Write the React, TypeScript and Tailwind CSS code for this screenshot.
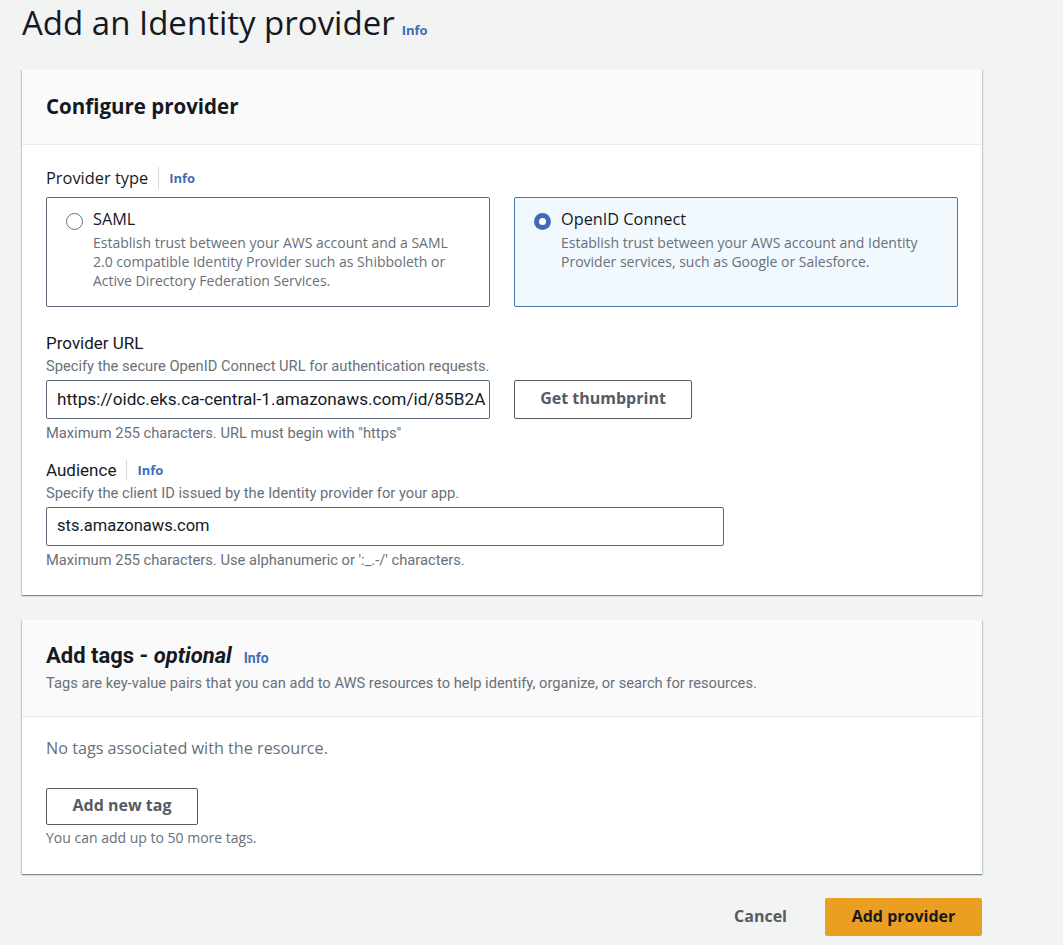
import React from "react";

const openSans = "font-['Open_Sans',sans-serif]";
const roboto = "font-['Roboto',sans-serif]";

const InfoLink = ({ className = "" }: { className?: string }) => (
  <span className={`${openSans} text-[13px] font-bold text-[#3f6db5] ${className}`}>Info</span>
);

type TileProps = {
  title: string;
  description: string;
  selected?: boolean;
};

const RadioTile = ({ title, description, selected }: TileProps) => (
  <div
    className={`flex h-[110px] gap-[10px] rounded-[2px] border pl-[19px] pr-[30px] pt-[10px] ${
      selected ? "border-[#4a73b8] bg-[#f1f8fe]" : "border-[#5f6b7a] bg-white"
    }`}
  >
    <div className="pt-[5px]">
      {selected ? (
        <div className="flex h-[17px] w-[17px] items-center justify-center rounded-full bg-[#3f6db5]">
          <div className="h-[7px] w-[7px] rounded-full bg-white" />
        </div>
      ) : (
        <div className="h-[17px] w-[17px] rounded-full border-[1.5px] border-[#687078] bg-white" />
      )}
    </div>
    <div className={openSans}>
      <div className="text-[16.3px] leading-[22px] text-[#16191f]">{title}</div>
      <p className="mt-[3px] text-[14px] leading-[19px] text-[#687078]">{description}</p>
    </div>
  </div>
);

const Field = ({
  label,
  info,
  description,
  children,
  hint,
}: {
  label: string;
  info?: boolean;
  description: string;
  children: React.ReactNode;
  hint: string;
}) => (
  <div className={roboto}>
    <div className="flex h-[22px] items-center text-[17px] leading-[22px] text-[#16191f]">
      <span>{label}</span>
      {info && (
        <>
          <span className="mx-[10px] h-[20px] w-px bg-[#d5dbdb]" />
          <InfoLink />
        </>
      )}
    </div>
    <p className="mt-[2px] text-[14.7px] leading-[20px] text-[#687078]">{description}</p>
    <div className="mt-[4px]">{children}</div>
    <p className="mt-[4px] text-[14.7px] leading-[20px] text-[#687078]">{hint}</p>
  </div>
);

const cardShadow =
  "shadow-[0_1px_1px_0_rgba(0,28,36,0.3),1px_1px_1px_0_rgba(0,28,36,0.15),-1px_1px_1px_0_rgba(0,28,36,0.15)]";

export default function App() {
  return (
    <div className="min-h-[945px] bg-[#f2f3f3] pl-[22px] pr-[81px] pt-[3px] pb-[10px]">
      <div className="flex items-baseline gap-[7px]">
        <h1 className={`${openSans} text-[33px] leading-[40px] font-normal text-[#16191f]`}>
          Add an Identity provider
        </h1>
        <InfoLink />
      </div>

      {/* Configure provider */}
      <section className={`mt-[26px] bg-white ${cardShadow}`}>
        <div className="flex h-[76px] items-center border-b border-[#eaeded] bg-[#fafafa] px-[24px]">
          <h2 className={`${openSans} text-[20.5px] font-bold text-[#16191f]`}>Configure provider</h2>
        </div>
        <div className="px-[24px] pt-[22px] pb-[25px]">
          <div className={`flex h-[22px] items-center ${openSans} text-[16.4px] leading-[22px] text-[#16191f]`}>
            <span>Provider type</span>
            <span className="mx-[10px] h-[22px] w-px bg-[#d5dbdb]" />
            <InfoLink />
          </div>
          <div className="mt-[8px] grid w-[912px] grid-cols-2 gap-[24px]">
            <RadioTile
              title="SAML"
              description="Establish trust between your AWS account and a SAML 2.0 compatible Identity Provider such as Shibboleth or Active Directory Federation Services."
            />
            <RadioTile
              selected
              title="OpenID Connect"
              description="Establish trust between your AWS account and Identity Provider services, such as Google or Salesforce."
            />
          </div>

          <div className="mt-[25px]">
            <Field
              label="Provider URL"
              description="Specify the secure OpenID Connect URL for authentication requests."
              hint={'Maximum 255 characters. URL must begin with "https"'}
            >
              <div className="flex gap-[24px]">
                <div className="flex h-[39px] w-[444px] items-center overflow-hidden whitespace-nowrap rounded-[2px] border border-[#5f6b7a] px-[10px] text-[17.2px] text-[#16191f]">
                  https://oidc.eks.ca-central-1.amazonaws.com/id/85B2A
                </div>
                <button
                  className={`${openSans} h-[39px] w-[178px] rounded-[2px] border border-[#545b64] bg-white pb-[3px] text-[16px] font-bold text-[#545b64]`}
                >
                  Get thumbprint
                </button>
              </div>
            </Field>
          </div>

          <div className="mt-[16px]">
            <Field
              label="Audience"
              info
              description="Specify the client ID issued by the Identity provider for your app."
              hint="Maximum 255 characters. Use alphanumeric or ':_.-/' characters."
            >
              <div className="flex h-[39px] w-[678px] items-center rounded-[2px] border border-[#5f6b7a] px-[10px] text-[16.5px] text-[#16191f]">
                sts.amazonaws.com
              </div>
            </Field>
          </div>
        </div>
      </section>

      {/* Add tags */}
      <section className={`mt-[25px] bg-white ${cardShadow}`}>
        <div className={`h-[97px] border-b border-[#eaeded] bg-[#fafafa] px-[24px] pt-[22px] ${roboto}`}>
          <div className="flex h-[28px] items-center gap-[12px]">
            <h2 className="text-[22px] leading-[28px] font-bold text-[#16191f]">
              Add tags - <i className="font-bold">optional</i>
            </h2>
            <InfoLink className={`${roboto} pt-[4px] text-[14px]`} />
          </div>
          <p className="mt-[3px] text-[14.7px] leading-[20px] text-[#687078]">
            Tags are key-value pairs that you can add to AWS resources to help identify, organize, or search for resources.
          </p>
        </div>
        <div className={`px-[24px] pt-[20px] pb-[26px] ${openSans}`}>
          <p className="text-[16.2px] leading-[22px] text-[#687078]">No tags associated with the resource.</p>
          <button className="mt-[29px] h-[37px] w-[152px] rounded-[2px] border border-[#545b64] bg-white pb-[3px] text-[16px] font-bold text-[#545b64]">
            Add new tag
          </button>
          <p className="mt-[3px] text-[14px] leading-[20px] text-[#687078]">You can add up to 50 more tags.</p>
        </div>
      </section>

      <div className={`mt-[24px] flex items-center justify-end gap-[18px] ${openSans}`}>
        <button className="px-[20px] pb-[3px] text-[16px] font-bold text-[#545b64]">Cancel</button>
        <button className="h-[38px] w-[157px] rounded-[2px] bg-[#eb9f22] pb-[3px] text-[16px] font-bold text-[#16191f]">
          Add provider
        </button>
      </div>
    </div>
  );
}
